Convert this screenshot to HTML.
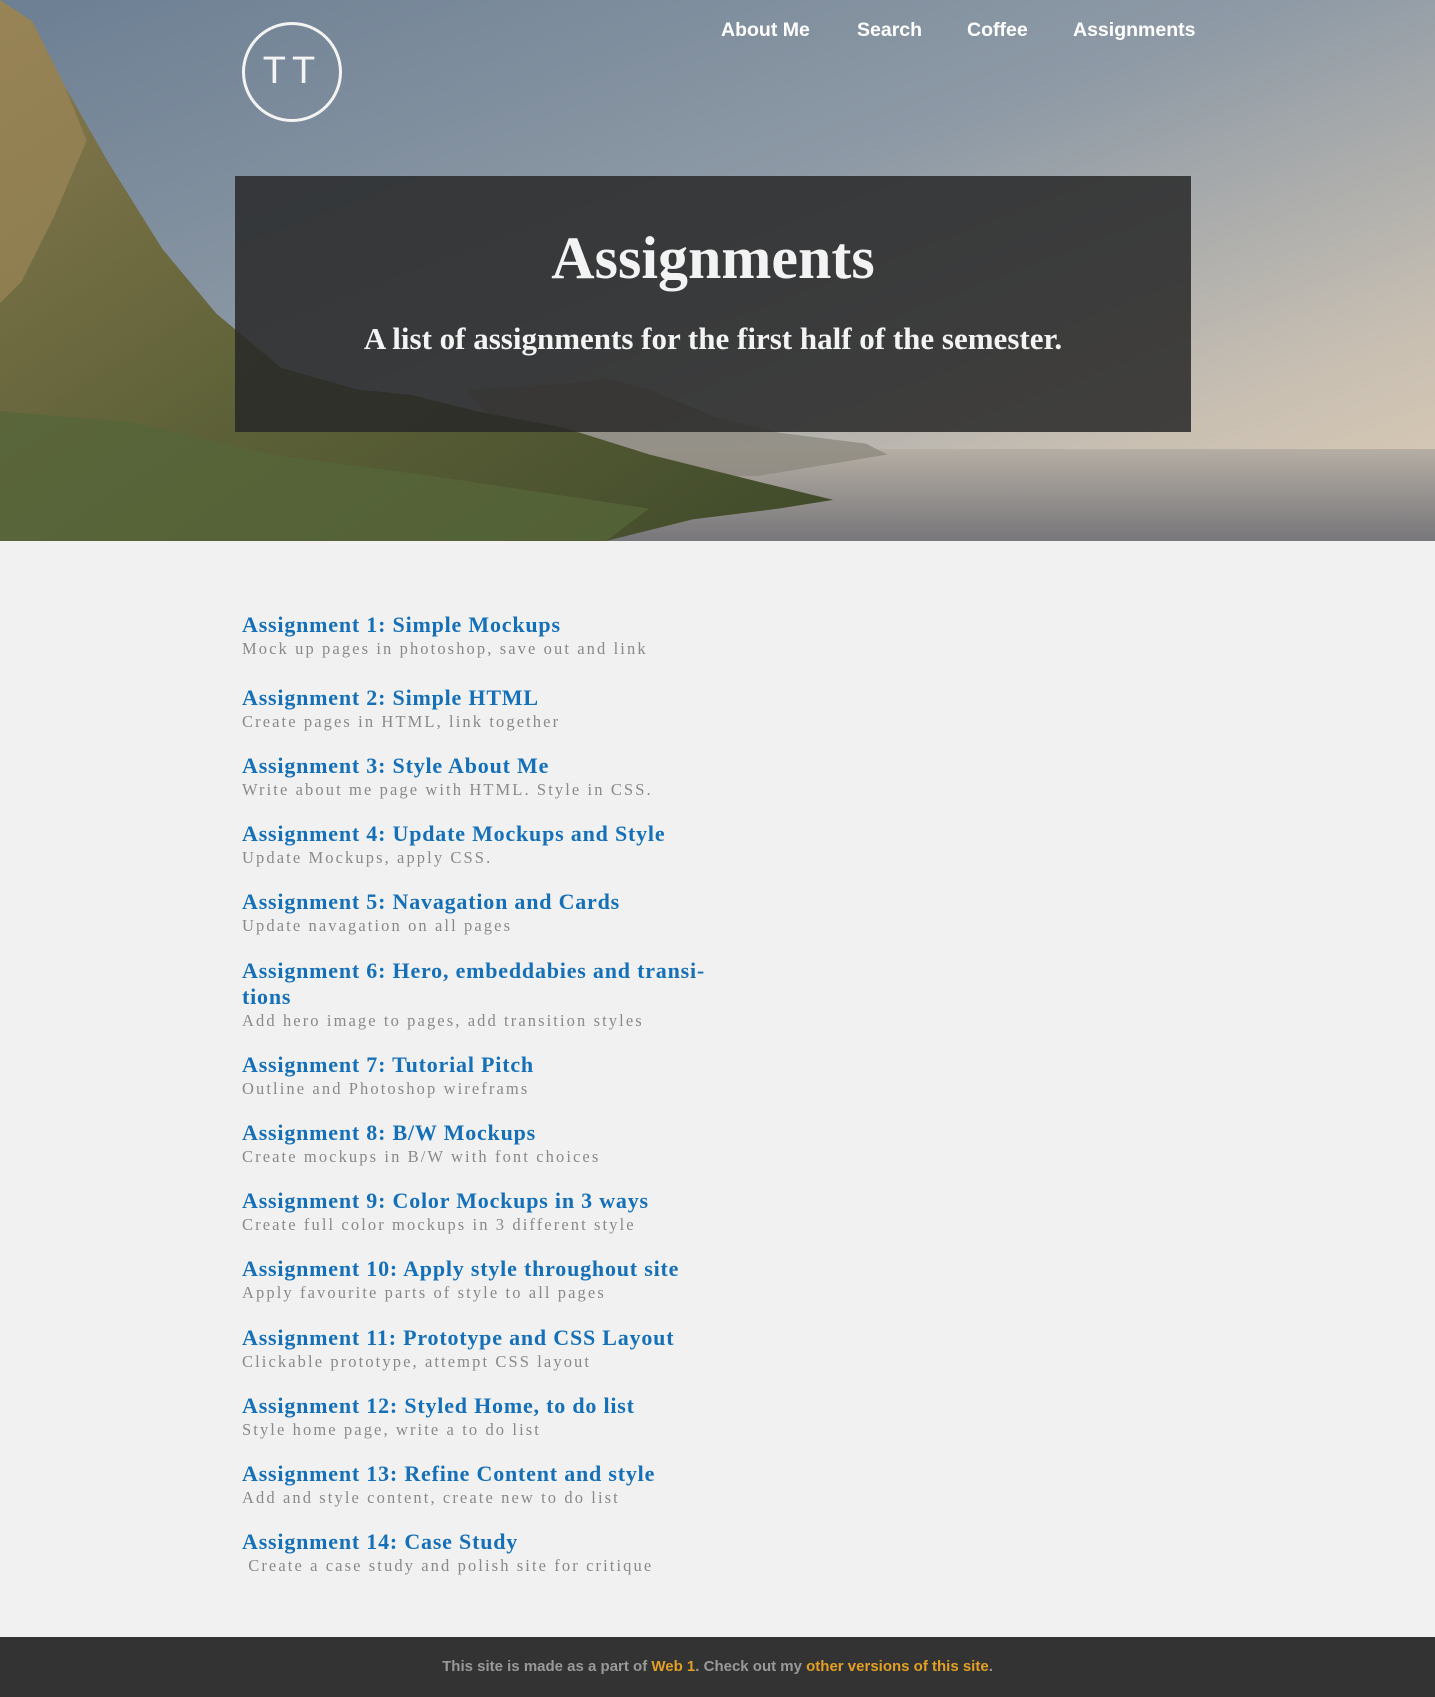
<!DOCTYPE html>
<html><head><meta charset="utf-8"><style>
*{margin:0;padding:0;box-sizing:border-box}
body{width:1435px;height:1697px;background:#f1f1f1;position:relative;overflow:hidden;font-family:"Liberation Sans",Arial,sans-serif}
.hero{position:absolute;left:0;top:0;width:1435px;height:541px;overflow:hidden}
.hero svg{position:absolute;left:0;top:0}
.logo{position:absolute;left:242px;top:22px;width:100px;height:100px;border:3.5px solid #f4f4f4;border-radius:50%;color:#f4f4f4;font-size:38px;text-align:center;line-height:92px;letter-spacing:6px;font-weight:300}
.nav a{position:absolute;top:19px;color:#fff;font-weight:bold;font-size:19.5px;text-decoration:none}
.box{position:absolute;left:235px;top:176px;width:956px;height:256px;background:rgba(40,40,40,.85);color:#f3f3f3;text-align:center;font-family:"Liberation Serif",serif;font-weight:bold}
.box h1{position:absolute;top:47px;width:100%;font-size:60px;line-height:70px}
.box h2{position:absolute;top:144px;width:100%;font-size:31px;line-height:38px}
.item{position:absolute;left:242px;width:490px;font-family:"Liberation Serif",serif}
.item .t{color:#1570b8;font-weight:bold;font-size:22px;line-height:26px;letter-spacing:.8px}
.item .d{color:#8a8a8a;font-size:16.5px;line-height:22px;letter-spacing:2.1px}
.foot{position:absolute;left:0;top:1637px;width:1435px;height:60px;background:#333;text-align:center;color:#999;font-weight:bold;font-size:15px;line-height:60px}
.foot span{color:#e29f24}
</style></head><body>
<div class="hero">
<svg width="1435" height="541" viewBox="0 0 1326 500" preserveAspectRatio="none">
<defs>
<linearGradient id="sky" x1="0" y1="0" x2="1" y2="1">
<stop offset="0" stop-color="#6c7f93"/><stop offset=".45" stop-color="#8e9aa6"/><stop offset=".8" stop-color="#c8bfb2"/><stop offset="1" stop-color="#dccbb5"/></linearGradient>
<linearGradient id="sea" x1="0" y1="0" x2="0" y2="1"><stop offset="0" stop-color="#b5aea4"/><stop offset="1" stop-color="#77767a"/></linearGradient>
<linearGradient id="cliff" x1="0" y1="0" x2="1" y2="1"><stop offset="0" stop-color="#8a7a50"/><stop offset=".5" stop-color="#5f6238"/><stop offset="1" stop-color="#3f4a2a"/></linearGradient>
</defs>
<rect width="1326" height="500" fill="url(#sky)"/>
<rect y="415" width="1326" height="85" fill="url(#sea)"/>
<path d="M430 360 L520 355 L560 350 L600 360 L660 385 L720 400 L800 410 L820 420 L700 440 L500 440Z" fill="#8d8a80" opacity=".8"/>
<path d="M0 0 L30 20 L60 80 L100 150 L150 230 L200 290 L260 340 L330 360 L380 365 L440 380 L520 395 L600 420 L700 445 L770 462 L720 470 L640 480 L560 500 L0 500Z" fill="url(#cliff)"/>
<path d="M0 380 L120 390 L250 420 L400 440 L600 470 L560 500 L0 500Z" fill="#56653a" opacity=".8"/>
<path d="M0 0 L30 20 L60 80 L80 130 L50 200 L20 260 L0 280Z" fill="#a28a5a" opacity=".6"/>
</svg>
<div class="logo">TT</div>
<div class="nav"><a style="left:721px">About Me</a><a style="left:857px">Search</a><a style="left:967px">Coffee</a><a style="left:1073px">Assignments</a></div>
<div class="box"><h1>Assignments</h1><h2>A list of assignments for the first half of the semester.</h2></div>
</div>

<div class="item" style="top:612px"><div class="t">Assignment 1: Simple Mockups</div><div class="d">Mock up pages in photoshop, save out and link</div></div>
<div class="item" style="top:685px"><div class="t">Assignment 2: Simple HTML</div><div class="d">Create pages in HTML, link together</div></div>
<div class="item" style="top:753px"><div class="t">Assignment 3: Style About Me</div><div class="d">Write about me page with HTML. Style in CSS.</div></div>
<div class="item" style="top:821px"><div class="t">Assignment 4: Update Mockups and Style</div><div class="d">Update Mockups, apply CSS.</div></div>
<div class="item" style="top:889px"><div class="t">Assignment 5: Navagation and Cards</div><div class="d">Update navagation on all pages</div></div>
<div class="item" style="top:958px"><div class="t">Assignment 6: Hero, embeddabies and transi-<br>tions</div><div class="d">Add hero image to pages, add transition styles</div></div>
<div class="item" style="top:1052px"><div class="t">Assignment 7: Tutorial Pitch</div><div class="d">Outline and Photoshop wireframs</div></div>
<div class="item" style="top:1120px"><div class="t">Assignment 8: B/W Mockups</div><div class="d">Create mockups in B/W with font choices</div></div>
<div class="item" style="top:1188px"><div class="t">Assignment 9: Color Mockups in 3 ways</div><div class="d">Create full color mockups in 3 different style</div></div>
<div class="item" style="top:1256px"><div class="t">Assignment 10: Apply style throughout site</div><div class="d">Apply favourite parts of style to all pages</div></div>
<div class="item" style="top:1325px"><div class="t">Assignment 11: Prototype and CSS Layout</div><div class="d">Clickable prototype, attempt CSS layout</div></div>
<div class="item" style="top:1393px"><div class="t">Assignment 12: Styled Home, to do list</div><div class="d">Style home page, write a to do list</div></div>
<div class="item" style="top:1461px"><div class="t">Assignment 13: Refine Content and style</div><div class="d">Add and style content, create new to do list</div></div>
<div class="item" style="top:1529px"><div class="t">Assignment 14: Case Study</div><div class="d">&nbsp;Create a case study and polish site for critique</div></div>

<div class="foot">This site is made as a part of <span>Web 1</span>. Check out my <span>other versions of this site</span>.</div>
</body></html>
